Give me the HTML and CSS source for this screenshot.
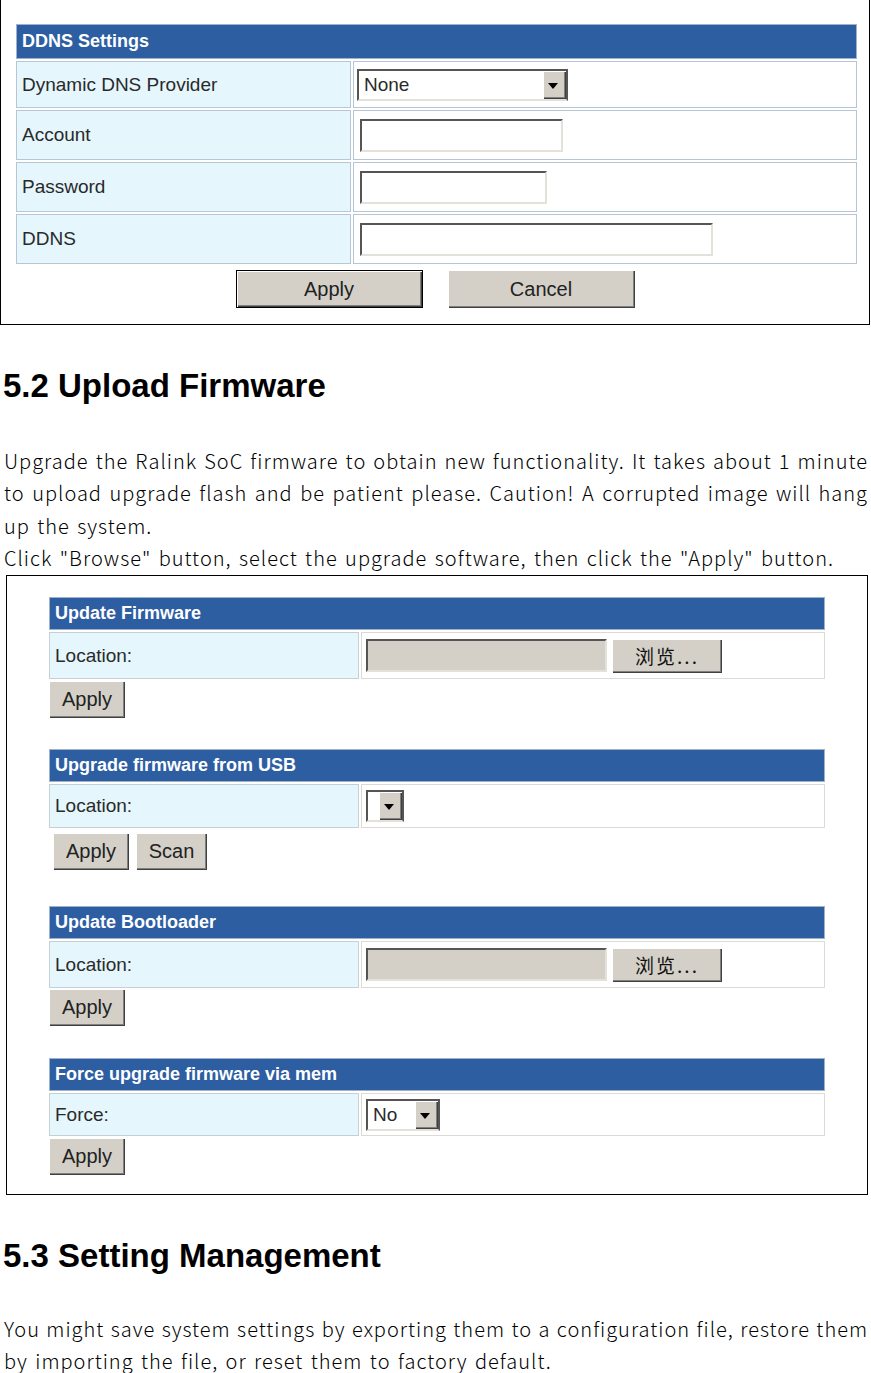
FILE: index.html
```html
<!DOCTYPE html>
<html lang="en">
<head>
<meta charset="UTF-8">
<meta name="viewport" content="width=device-width, initial-scale=1.0">
<title>Administration - Upload Firmware</title>
<link rel="stylesheet" href="styles.css">
</head>
<body>

<!-- screenshot: DDNS settings -->
<div class="shot shot-ddns">
  <div class="bar">DDNS Settings</div>
  <div class="row row-a">
    <div class="lbl">Dynamic DNS Provider</div>
    <div class="val">
      <span class="sel sel-provider"><select><option>None</option></select></span>
    </div>
  </div>
  <div class="row">
    <div class="lbl">Account</div>
    <div class="val"><input type="text" class="box in-account"></div>
  </div>
  <div class="row">
    <div class="lbl">Password</div>
    <div class="val"><input type="password" class="box in-password"></div>
  </div>
  <div class="row">
    <div class="lbl">DDNS</div>
    <div class="val"><input type="text" class="box in-ddns"></div>
  </div>
  <div class="btns">
    <button class="btn btn-wide btn-default">Apply</button>
    <button class="btn btn-wide">Cancel</button>
  </div>
</div>

<h2>5.2 Upload Firmware</h2>
<p class="txt">
  <span class="jl">Upgrade the Ralink SoC firmware to obtain new functionality. It takes about 1 minute</span>
  <span class="jl">to upload upgrade flash and be patient please. Caution! A corrupted image will hang</span>
  <span class="ln">up the system.</span>
  <span class="ln">Click "Browse" button, select the upgrade software, then click the "Apply" button.</span>
</p>

<!-- screenshot: upload firmware page -->
<div class="shot shot-fw">
  <div class="sec">
    <div class="bar">Update Firmware</div>
    <div class="row row-file">
      <div class="lbl">Location:</div>
      <div class="val">
        <input type="text" class="box file-path" readonly>
        <button class="btn btn-browse">浏览...</button>
      </div>
    </div>
    <div class="acts"><button class="btn btn-sm">Apply</button></div>
  </div>

  <div class="sec sec-usb">
    <div class="bar">Upgrade firmware from USB</div>
    <div class="row row-usb">
      <div class="lbl">Location:</div>
      <div class="val">
        <span class="sel sel-usb"><select><option></option></select></span>
      </div>
    </div>
    <div class="acts acts-usb">
      <button class="btn btn-sm">Apply</button>
      <button class="btn btn-scan">Scan</button>
    </div>
  </div>

  <div class="sec sec-boot">
    <div class="bar">Update Bootloader</div>
    <div class="row row-file">
      <div class="lbl">Location:</div>
      <div class="val">
        <input type="text" class="box file-path" readonly>
        <button class="btn btn-browse">浏览...</button>
      </div>
    </div>
    <div class="acts acts-tight"><button class="btn btn-sm">Apply</button></div>
  </div>

  <div class="sec sec-mem">
    <div class="bar">Force upgrade firmware via mem</div>
    <div class="row row-force">
      <div class="lbl">Force:</div>
      <div class="val">
        <span class="sel sel-force"><select><option>No</option><option>Yes</option></select></span>
      </div>
    </div>
    <div class="acts"><button class="btn btn-sm">Apply</button></div>
  </div>
</div>

<h2>5.3 Setting Management</h2>
<p class="txt txt-end">
  <span class="jl">You might save system settings by exporting them to a configuration file, restore them</span>
  <span class="ln">by importing the file, or reset them to factory default.</span>
</p>

</body>
</html>
```

FILE: styles.css
```css
* {
  box-sizing: border-box;
}

body {
  margin: 0;
  background: #fff;
  color: #000;
  font-family: "Liberation Sans", Arial, sans-serif;
}

/* framed screenshots */
.shot {
  border: 1px solid #000;
  background: #fff;
}

.shot-ddns {
  width: 870px;
  border-top: none;
  padding: 24px 0 16px 15px;
}

.shot-fw {
  width: 862px;
  margin: 1px 0 0 6px;
  padding: 21px 0 19px 42px;
}

.bar {
  background: #2d5ea2;
  border: 1px solid #9fb2c9;
  color: #fff;
  font-size: 18px;
  font-weight: bold;
  padding-left: 5px;
  display: flex;
  align-items: center;
}

.shot-ddns .bar {
  width: 841px;
  height: 35px;
}

.shot-fw .bar {
  width: 776px;
  height: 33px;
}

.row {
  display: flex;
  gap: 2px;
  margin-top: 2px;
}

.shot-ddns .row {
  width: 841px;
  height: 50px;
}

.shot-ddns .row-a {
  height: 47px;
}

.lbl {
  display: flex;
  align-items: center;
  padding-left: 5px;
  background: #e5f6fd;
  border: 1px solid #b7c6d7;
  font-size: 19px;
  color: #2a2a2a;
}

.val {
  flex: 1;
  display: flex;
  align-items: center;
  gap: 5px;
  background: #fff;
  border: 1px solid #b7c6d7;
  padding-left: 6px;
}

.shot-ddns .lbl {
  width: 335px;
}

.shot-fw .row {
  width: 776px;
}

.shot-fw .lbl {
  width: 310px;
  border-color: #c6ced6;
}

.shot-fw .val {
  border-color: #dcdad4;
  padding-left: 4px;
}

.row-file {
  height: 47px;
}

.row-usb {
  height: 44px;
}

.row-force {
  height: 43px;
}

/* classic form controls */
.box {
  height: 33px;
  border: 2px solid;
  border-color: #555 #e4e1da #e4e1da #555;
  background: #fff;
  font: 19px "Liberation Sans", Arial, sans-serif;
  padding: 0 4px;
  border-radius: 0;
}

.in-account {
  width: 203px;
}

.in-password {
  width: 187px;
}

.in-ddns {
  width: 353px;
}

.file-path {
  width: 241px;
  background: #d4d0c8;
}

.sel {
  position: relative;
  display: inline-block;
  height: 32px;
}

.sel select {
  appearance: none;
  -webkit-appearance: none;
  width: 100%;
  height: 100%;
  border: 2px solid;
  border-color: #555 #555 #e4e1da #555;
  border-radius: 0;
  background: #fff;
  font: 19px "Liberation Sans", Arial, sans-serif;
  color: #2a2a2a;
  padding: 0 0 0 5px;
}

/* drop-down arrow button */
.sel::after {
  content: "";
  position: absolute;
  top: 2px;
  right: 2px;
  bottom: 2px;
  width: 23px;
  background: #d4d0c8;
  box-shadow: inset 1px 1px 0 #fff, inset -1px -1px 0 #404040, inset -2px -2px 0 #808080;
}

.sel::before {
  content: "";
  position: absolute;
  z-index: 1;
  top: 50%;
  right: 10px;
  margin-top: -2px;
  border-left: 5px solid transparent;
  border-right: 5px solid transparent;
  border-top: 6px solid #000;
}

.sel-provider {
  width: 211px;
  margin-left: -3px;
}

.sel-usb {
  width: 38px;
}

.sel-force {
  width: 74px;
}

.btn {
  background: #d4d0c8;
  color: #222;
  font: 20px "Liberation Sans", Arial, sans-serif;
  border: none;
  padding: 0;
  box-shadow: inset 1px 1px 0 #fff, inset -1px -1px 0 #404040, inset -2px -2px 0 #808080;
  border-radius: 0;
}

.btn-default {
  border: 1px solid #000;
}

.btn-wide {
  width: 187px;
  height: 38px;
}

.btn-sm {
  width: 76px;
  height: 37px;
}

.btn-scan {
  width: 71px;
  height: 37px;
}

.btn-browse {
  width: 110px;
  height: 34px;
  font: 19px "Noto Sans CJK SC", sans-serif;
  letter-spacing: 2px;
  color: #111;
}

.btns {
  width: 841px;
  display: flex;
  justify-content: center;
  gap: 25px;
  margin-top: 6px;
  padding-right: 3px;
}

.acts {
  display: flex;
  gap: 7px;
  margin-top: 2px;
}

.acts-usb {
  margin-top: 5px;
  padding-left: 4px;
}

.acts-tight {
  margin-top: 1px;
}

.sec-usb {
  margin-top: 31px;
}

.sec-boot {
  margin-top: 36px;
}

.sec-mem {
  margin-top: 32px;
}

/* document text */
h2 {
  margin: 41px 0 0;
  padding-left: 3px;
  font-size: 33px;
  line-height: 40px;
  font-weight: bold;
}

.txt {
  margin: 39px 0 0;
  padding: 0 3px 0 4px;
  font-family: "Noto Sans CJK KR", sans-serif;
  font-size: 20px;
  font-weight: 300;
  line-height: 32.3px;
  letter-spacing: 1px;
}

.txt-end {
  margin-top: 37px;
}

.jl {
  display: block;
  white-space: nowrap;
  text-align: justify;
  text-align-last: justify;
}

.ln {
  display: block;
  word-spacing: 2px;
}
```
